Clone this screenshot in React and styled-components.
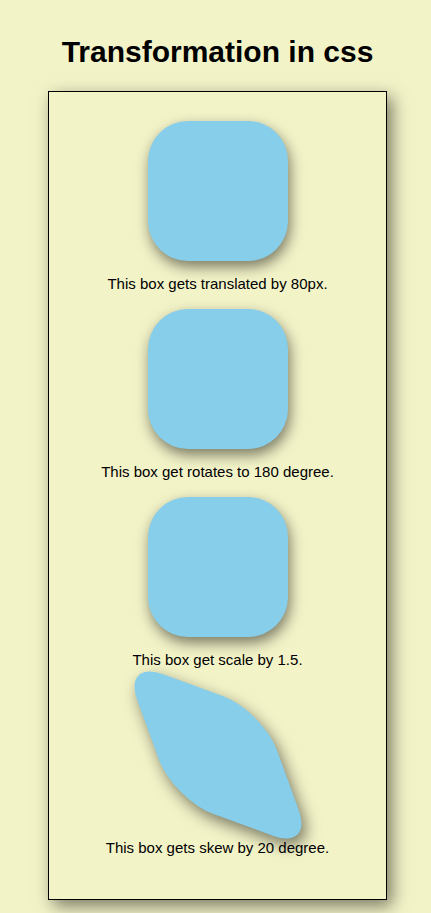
import React from "react";
import styled, { createGlobalStyle } from "styled-components";

const GlobalStyle = createGlobalStyle`
  body {
    margin: 0;
    background: #f3f3c8;
    font-family: "Liberation Sans", Arial, sans-serif;
  }
`;

const items = [
  { text: "This box gets translated by 80px.", transform: "none" },
  { text: "This box get rotates to 180 degree.", transform: "none" },
  { text: "This box get scale by 1.5.", transform: "none" },
  { text: "This box gets skew by 20 degree.", transform: "skew(20deg, 20deg)" },
];

export default function App() {
  return (
    <Page>
      <GlobalStyle />
      <Title>Transformation in css</Title>
      <Container>
        {items.map((item) => (
          <Item key={item.text}>
            <Box $transform={item.transform} />
            <Caption>{item.text}</Caption>
          </Item>
        ))}
      </Container>
    </Page>
  );
}

const Page = styled.div`
  padding: 1px 0 14px 4px;
`;

const Title = styled.h1`
  margin: 34px 0 22px;
  text-align: center;
  font-size: 30px;
  font-weight: 700;
  color: #000;
`;

const Container = styled.div`
  width: 337px;
  margin: 0 auto;
  padding: 13px 0 42px;
  border: 1px solid #000;
  box-shadow: 5px 6px 16px rgba(0, 0, 0, 0.5);
  display: flex;
  flex-direction: column;
  align-items: center;
`;

const Item = styled.div`
  margin-top: 16px;
  display: flex;
  flex-direction: column;
  align-items: center;
`;

const Box = styled.div`
  width: 140px;
  height: 140px;
  border-radius: 40px;
  background: #87ceeb;
  box-shadow: 2px 6px 14px rgba(0, 0, 0, 0.5);
  transform: ${(props) => props.$transform};
  margin-bottom: 14px;
`;

const Caption = styled.p`
  margin: 0;
  font-size: 15px;
  line-height: 18px;
  color: #000;
`;
